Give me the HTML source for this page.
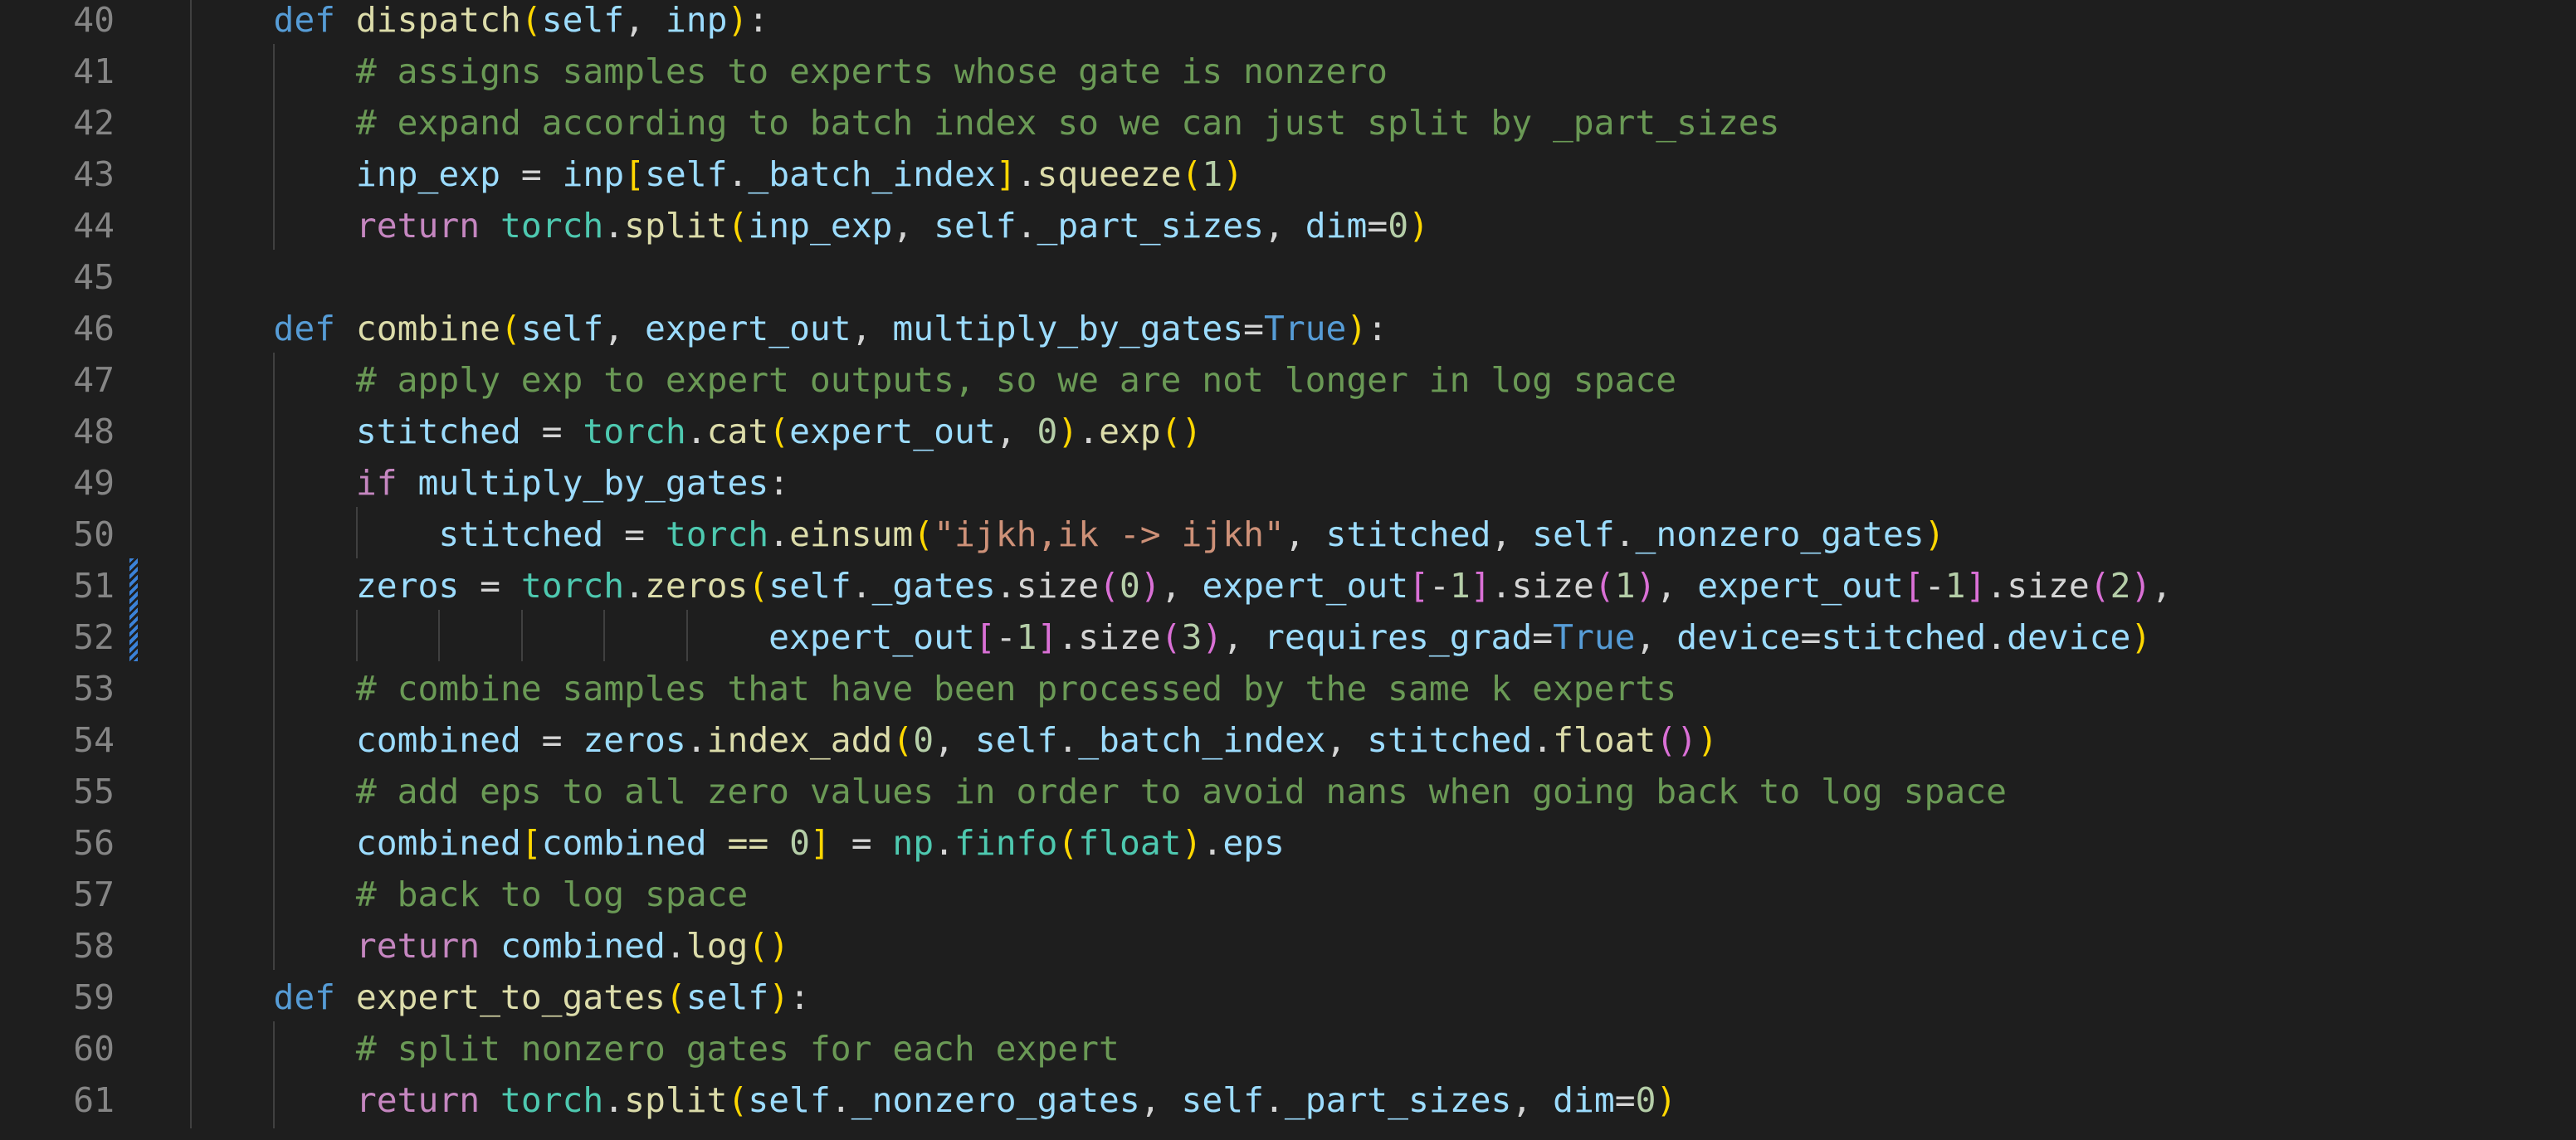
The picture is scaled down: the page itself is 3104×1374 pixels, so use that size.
<!DOCTYPE html>
<html><head><meta charset="utf-8"><style>
html,body{margin:0;padding:0;background:#1e1e1e;width:3104px;height:1374px;overflow:hidden;position:relative}
.ln{position:absolute;left:0;width:138px;text-align:right;color:#858585;font-family:"DejaVu Sans Mono","Liberation Mono",monospace;font-size:41.3px;line-height:62px;height:62px;white-space:pre;margin-top:2px}
.code{position:absolute;left:230px;font-family:"DejaVu Sans Mono","Liberation Mono",monospace;font-size:41.3px;line-height:62px;height:62px;white-space:pre;color:#d4d4d4;margin-top:2px}
.g{position:absolute;width:2px;background:#404040}
.k{color:#569cd6}.f{color:#dcdcaa}.v{color:#9cdcfe}.c{color:#6a9955}.p{color:#c586c0}.t{color:#4ec9b0}.n{color:#b5cea8}.s{color:#ce9178}.b1{color:#ffd700}.b2{color:#da70d6}.o{color:#d4d4d4}.op{color:#dcdcaa}
.mk{position:absolute;left:156px;width:10px;top:673px;height:124px;background:repeating-linear-gradient(135deg,#3b82d8 0 4px,#1e1e1e 4px 7px)}
</style></head><body>
<div class="g" style="left:229px;top:0;height:1360px"></div>
<div class="g" style="left:329px;top:53px;height:248px"></div>
<div class="g" style="left:329px;top:425px;height:744px"></div>
<div class="g" style="left:329px;top:1231px;height:129px"></div>
<div class="g" style="left:429px;top:611px;height:62px"></div>
<div class="g" style="left:429px;top:735px;height:62px"></div>
<div class="g" style="left:528px;top:735px;height:62px"></div>
<div class="g" style="left:628px;top:735px;height:62px"></div>
<div class="g" style="left:727px;top:735px;height:62px"></div>
<div class="g" style="left:827px;top:735px;height:62px"></div>
<div class="mk"></div>

<div class="ln" style="top:-9px">40</div><div class="code" style="top:-9px">    <span class="k">def</span> <span class="f">dispatch</span><span class="b1">(</span><span class="v">self</span>, <span class="v">inp</span><span class="b1">)</span>:</div>
<div class="ln" style="top:53px">41</div><div class="code c" style="top:53px">        # assigns samples to experts whose gate is nonzero</div>
<div class="ln" style="top:115px">42</div><div class="code c" style="top:115px">        # expand according to batch index so we can just split by _part_sizes</div>
<div class="ln" style="top:177px">43</div><div class="code" style="top:177px">        <span class="v">inp_exp</span> = <span class="v">inp</span><span class="b1">[</span><span class="v">self</span>.<span class="v">_batch_index</span><span class="b1">]</span>.<span class="f">squeeze</span><span class="b1">(</span><span class="n">1</span><span class="b1">)</span></div>
<div class="ln" style="top:239px">44</div><div class="code" style="top:239px">        <span class="p">return</span> <span class="t">torch</span>.<span class="f">split</span><span class="b1">(</span><span class="v">inp_exp</span>, <span class="v">self</span>.<span class="v">_part_sizes</span>, <span class="v">dim</span>=<span class="n">0</span><span class="b1">)</span></div>
<div class="ln" style="top:301px">45</div>
<div class="ln" style="top:363px">46</div><div class="code" style="top:363px">    <span class="k">def</span> <span class="f">combine</span><span class="b1">(</span><span class="v">self</span>, <span class="v">expert_out</span>, <span class="v">multiply_by_gates</span>=<span class="k">True</span><span class="b1">)</span>:</div>
<div class="ln" style="top:425px">47</div><div class="code c" style="top:425px">        # apply exp to expert outputs, so we are not longer in log space</div>
<div class="ln" style="top:487px">48</div><div class="code" style="top:487px">        <span class="v">stitched</span> = <span class="t">torch</span>.<span class="f">cat</span><span class="b1">(</span><span class="v">expert_out</span>, <span class="n">0</span><span class="b1">)</span>.<span class="f">exp</span><span class="b1">()</span></div>
<div class="ln" style="top:549px">49</div><div class="code" style="top:549px">        <span class="p">if</span> <span class="v">multiply_by_gates</span>:</div>
<div class="ln" style="top:611px">50</div><div class="code" style="top:611px">            <span class="v">stitched</span> = <span class="t">torch</span>.<span class="f">einsum</span><span class="b1">(</span><span class="s">"ijkh,ik -&gt; ijkh"</span>, <span class="v">stitched</span>, <span class="v">self</span>.<span class="v">_nonzero_gates</span><span class="b1">)</span></div>
<div class="ln" style="top:673px">51</div><div class="code" style="top:673px">        <span class="v">zeros</span> = <span class="t">torch</span>.<span class="f">zeros</span><span class="b1">(</span><span class="v">self</span>.<span class="v">_gates</span>.size<span class="b2">(</span><span class="n">0</span><span class="b2">)</span>, <span class="v">expert_out</span><span class="b2">[</span>-<span class="n">1</span><span class="b2">]</span>.size<span class="b2">(</span><span class="n">1</span><span class="b2">)</span>, <span class="v">expert_out</span><span class="b2">[</span>-<span class="n">1</span><span class="b2">]</span>.size<span class="b2">(</span><span class="n">2</span><span class="b2">)</span>,</div>
<div class="ln" style="top:735px">52</div><div class="code" style="top:735px">                            <span class="v">expert_out</span><span class="b2">[</span>-<span class="n">1</span><span class="b2">]</span>.size<span class="b2">(</span><span class="n">3</span><span class="b2">)</span>, <span class="v">requires_grad</span>=<span class="k">True</span>, <span class="v">device</span>=<span class="v">stitched</span>.<span class="v">device</span><span class="b1">)</span></div>
<div class="ln" style="top:797px">53</div><div class="code c" style="top:797px">        # combine samples that have been processed by the same k experts</div>
<div class="ln" style="top:859px">54</div><div class="code" style="top:859px">        <span class="v">combined</span> = <span class="v">zeros</span>.<span class="f">index_add</span><span class="b1">(</span><span class="n">0</span>, <span class="v">self</span>.<span class="v">_batch_index</span>, <span class="v">stitched</span>.<span class="f">float</span><span class="b2">()</span><span class="b1">)</span></div>
<div class="ln" style="top:921px">55</div><div class="code c" style="top:921px">        # add eps to all zero values in order to avoid nans when going back to log space</div>
<div class="ln" style="top:983px">56</div><div class="code" style="top:983px">        <span class="v">combined</span><span class="b1">[</span><span class="v">combined</span> <span class="op">==</span> <span class="n">0</span><span class="b1">]</span> = <span class="t">np</span>.<span class="t">finfo</span><span class="b1">(</span><span class="t">float</span><span class="b1">)</span>.<span class="v">eps</span></div>
<div class="ln" style="top:1045px">57</div><div class="code c" style="top:1045px">        # back to log space</div>
<div class="ln" style="top:1107px">58</div><div class="code" style="top:1107px">        <span class="p">return</span> <span class="v">combined</span>.<span class="f">log</span><span class="b1">()</span></div>
<div class="ln" style="top:1169px">59</div><div class="code" style="top:1169px">    <span class="k">def</span> <span class="f">expert_to_gates</span><span class="b1">(</span><span class="v">self</span><span class="b1">)</span>:</div>
<div class="ln" style="top:1231px">60</div><div class="code c" style="top:1231px">        # split nonzero gates for each expert</div>
<div class="ln" style="top:1293px">61</div><div class="code" style="top:1293px">        <span class="p">return</span> <span class="t">torch</span>.<span class="f">split</span><span class="b1">(</span><span class="v">self</span>.<span class="v">_nonzero_gates</span>, <span class="v">self</span>.<span class="v">_part_sizes</span>, <span class="v">dim</span>=<span class="n">0</span><span class="b1">)</span></div>
</body></html>
